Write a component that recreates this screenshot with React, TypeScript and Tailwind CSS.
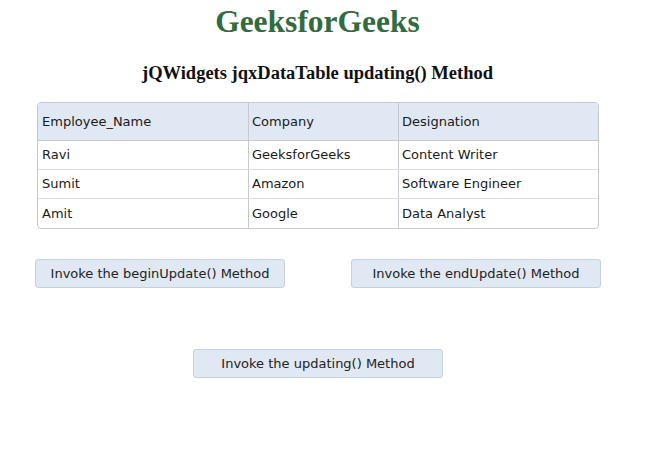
const rows = [
  { name: "Ravi", company: "GeeksforGeeks", designation: "Content Writer" },
  { name: "Sumit", company: "Amazon", designation: "Software Engineer" },
  { name: "Amit", company: "Google", designation: "Data Analyst" },
]

const serif = "font-['Liberation_Serif','Times_New_Roman',serif]"
const sans = "font-['DejaVu_Sans',Verdana,sans-serif]"

function Button({ label, className = "" }: { label: string; className?: string }) {
  return (
    <button
      className={`h-[29px] w-[250px] rounded-[3px] border border-[#c5d0de] bg-[#e0e8f3] text-[13px] text-[#222] ${sans} ${className}`}
    >
      {label}
    </button>
  )
}

export default function App() {
  return (
    <div className="min-h-[454px] w-[647px] bg-white">
      <div className="w-[635px]">
        <h1 className={`pt-[2px] h-[44px] text-center text-[31.5px] font-bold leading-[40px] text-[#336b3f] ${serif}`}>
          GeeksforGeeks
        </h1>
        <h3 className={`mt-[18px] h-[22px] text-center text-[18.5px] font-bold leading-[22px] text-[#111] ${serif}`}>
          jQWidgets jqxDataTable updating() Method
        </h3>
      </div>

      <div className={`ml-[37px] mt-[18px] w-[562px] overflow-hidden rounded-[4px] border border-[#c5c9cf] text-[13px] text-[#1a1a1a] ${sans}`}>
        <div className="flex h-[38px] items-center border-b border-[#c5c9cf] bg-[#e0e8f3]">
          <div className="flex h-full w-[211px] items-center border-r border-[#c5c9cf] pl-[4px]">Employee_Name</div>
          <div className="flex h-full w-[150px] items-center border-r border-[#c5c9cf] pl-[3px]">Company</div>
          <div className="flex h-full flex-1 items-center pl-[3px]">Designation</div>
        </div>
        {rows.map((row, index) => (
          <div
            key={row.name}
            className={`flex h-[29px] items-center ${index === rows.length - 1 ? "h-[28px]" : "border-b border-[#d9dde2]"}`}
          >
            <div className="flex h-full w-[211px] items-center border-r border-[#c5c9cf] pl-[4px]">{row.name}</div>
            <div className="flex h-full w-[150px] items-center border-r border-[#c5c9cf] pl-[3px]">{row.company}</div>
            <div className="flex h-full flex-1 items-center pl-[3px]">{row.designation}</div>
          </div>
        ))}
      </div>

      <div className="ml-[35px] mt-[30px] flex gap-[66px]">
        <Button label="Invoke the beginUpdate() Method" />
        <Button label="Invoke the endUpdate() Method" />
      </div>

      <div className="ml-[193px] mt-[61px]">
        <Button label="Invoke the updating() Method" />
      </div>
    </div>
  )
}
